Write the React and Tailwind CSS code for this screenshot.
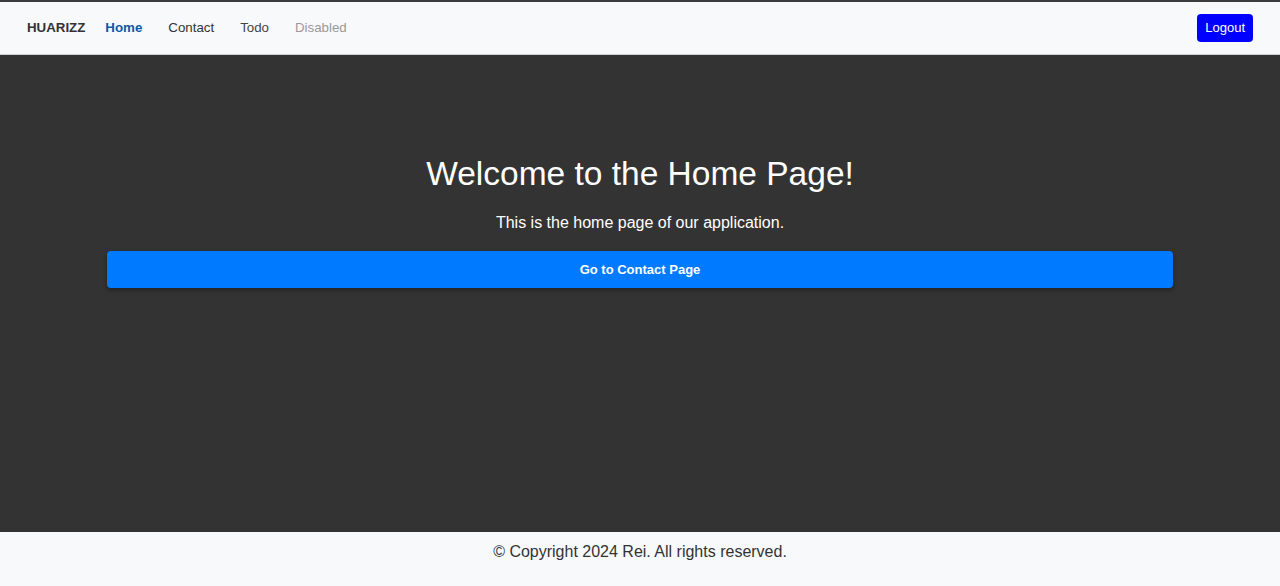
const App = () => {
  return (
    <div
      className="flex flex-col h-screen bg-[#333333]"
      style={{ fontFamily: '"Liberation Sans", Arial, sans-serif' }}
    >
      {/* Navbar */}
      <nav className="h-[55px] flex-shrink-0 flex items-center justify-between px-[27px] bg-[#f8f9fa] border-t-2 border-t-[#3c3c3c] border-b border-b-[#d0d0d0]">
        <div className="flex items-center text-[13.3px]">
          <span className="font-bold text-[#333] mr-[7px]">HUARIZZ</span>
          <a className="px-[13px] font-bold text-[#0d5aa8]">Home</a>
          <a className="px-[13px] text-[#333]">Contact</a>
          <a className="px-[13px] text-[#444]">Todo</a>
          <a className="px-[13px] text-[#999]">Disabled</a>
        </div>
        <button className="h-[28px] px-[8px] rounded bg-[#0000ff] text-white text-[13px]">
          Logout
        </button>
      </nav>

      {/* Main Content */}
      <main className="flex-grow pt-[97px]">
        <div className="w-[1066px] mx-auto flex flex-col items-center">
          <h1 className="text-[33.5px] leading-[43px] text-white">Welcome to the Home Page!</h1>
          <p className="mt-[16px] text-[16px] leading-6 text-white">
            This is the home page of our application.
          </p>
          <button className="mt-[16px] w-full h-[37px] rounded bg-[#007bff] text-white text-[13px] font-bold shadow-[0_2px_5px_rgba(0,0,0,0.35)]">
            Go to Contact Page
          </button>
        </div>
      </main>

      {/* Footer */}
      <footer className="h-[54px] flex-shrink-0 bg-[#f8f9fa] pt-[8px] text-center text-[16px] leading-6 text-[#333]">
        © Copyright 2024 Rei. All rights reserved.
      </footer>
    </div>
  );
};

export default App;
